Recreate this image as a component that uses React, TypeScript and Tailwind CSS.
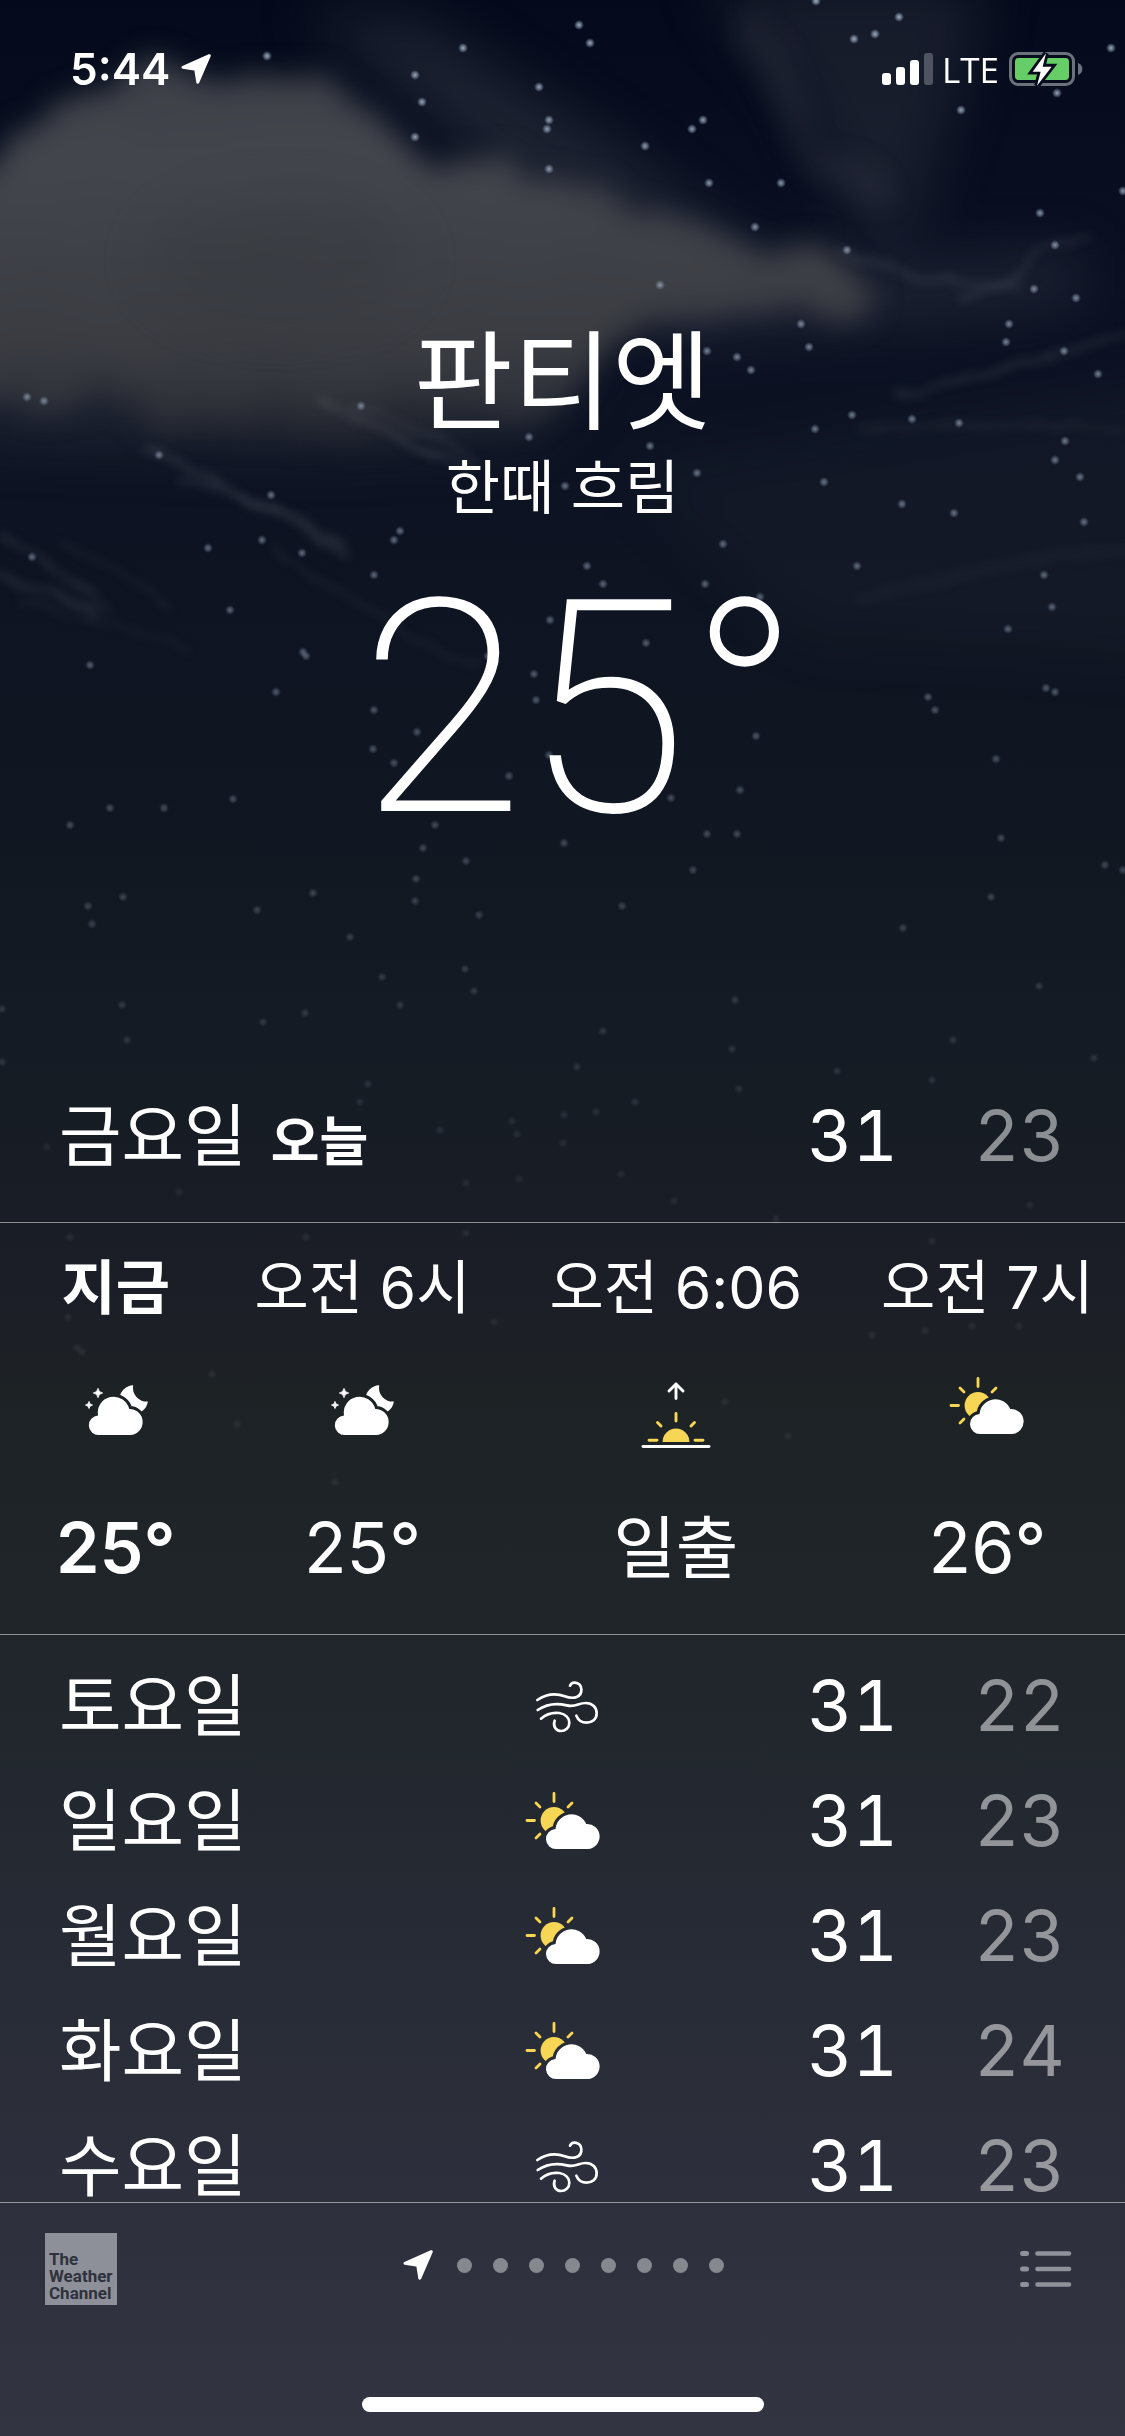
import React from 'react';
import clsx from 'clsx';

type IconName = 'moonCloud' | 'sunrise' | 'sunCloud' | 'wind';

type Hour = { label: string; icon: IconName; value: string; now?: boolean };
type Day = { name: string; icon: IconName; alt: string; high: number; low: number };

const hours: Hour[] = [
  { label: '지금', icon: 'moonCloud', value: '25°', now: true },
  { label: '오전 6시', icon: 'moonCloud', value: '25°' },
  { label: '오전 6:06', icon: 'sunrise', value: '일출' },
  { label: '오전 7시', icon: 'sunCloud', value: '26°' },
];

const days: Day[] = [
  { name: '토요일', icon: 'wind', alt: '바람', high: 31, low: 22 },
  { name: '일요일', icon: 'sunCloud', alt: '한때 흐림', high: 31, low: 23 },
  { name: '월요일', icon: 'sunCloud', alt: '한때 흐림', high: 31, low: 23 },
  { name: '화요일', icon: 'sunCloud', alt: '한때 흐림', high: 31, low: 24 },
  { name: '수요일', icon: 'wind', alt: '바람', high: 31, low: 23 },
];

const pages = [1, 2, 3, 4, 5, 6, 7, 8];

// [x, y] of every star in the sky, they fade towards the horizon
const stars: [number, number][] = [
  [579, 25], [590, 43], [463, 48], [267, 56], [415, 75], [539, 87], [422, 102], [549, 120],
  [547, 129], [415, 137], [703, 120], [692, 129], [645, 146], [549, 169], [709, 183], [781, 183],
  [755, 227], [847, 250], [660, 285], [899, 17], [875, 34], [854, 39], [816, 1], [1111, 48],
  [1057, 93], [961, 110], [1123, 191], [1040, 213], [1055, 245], [1034, 289], [1076, 298], [801, 324],
  [1009, 324], [1006, 342], [809, 347], [1064, 351], [707, 351], [737, 357], [751, 370], [1098, 374],
  [27, 397], [44, 401], [361, 406], [852, 415], [912, 419], [959, 423], [815, 429], [529, 437],
  [650, 446], [1065, 441], [1055, 460], [159, 455], [697, 473], [1080, 477], [824, 482], [565, 486],
  [271, 495], [902, 504], [954, 513], [1084, 522], [400, 531], [394, 540], [262, 540], [208, 548],
  [302, 553], [723, 544], [32, 557], [587, 566], [857, 566], [1044, 575], [374, 575], [603, 584],
  [705, 584], [760, 597], [1052, 607], [230, 610], [550, 620], [1008, 629], [646, 643], [303, 652],
  [306, 656], [488, 656], [90, 665], [534, 674], [1046, 688], [1055, 692], [276, 692], [928, 697],
  [935, 710], [374, 710], [417, 732], [373, 749], [394, 763], [536, 700], [549, 755], [509, 776],
  [671, 798], [740, 790], [756, 736], [996, 759], [435, 825], [707, 834], [737, 834], [233, 799],
  [110, 808], [164, 808], [70, 825], [564, 843], [1001, 838], [423, 848], [466, 861], [693, 870],
  [416, 879], [313, 893], [123, 897], [88, 906], [415, 901], [257, 910], [479, 915], [622, 906],
  [92, 924], [350, 937], [903, 928], [991, 897], [1105, 865], [1123, 870], [465, 969], [382, 977],
  [474, 991], [400, 1005], [305, 1013], [122, 1005], [263, 1022], [127, 1040], [1039, 986], [735, 1000],
  [603, 1031], [953, 1040], [732, 1049], [1094, 1058], [2, 1009], [2, 1062],
  [577, 1067], [368, 1084], [837, 1071], [932, 1080], [739, 1089], [360, 1102], [635, 1102],
  [596, 1112], [564, 1115], [512, 1121], [440, 1130], [517, 1134], [563, 1143], [47, 1147], [519, 1179],
  [621, 1174], [466, 1183], [179, 1192], [674, 1201], [1030, 1205], [776, 1219], [70, 1237], [306, 1237],
  [466, 1233], [932, 1241], [494, 1322], [872, 1335], [925, 1331], [972, 1326], [1019, 1326], [68, 1317],
  [77, 1348], [82, 1352], [212, 1374], [237, 1424], [725, 1402], [788, 1436], [335, 1482],
];

const Sky: React.FC = () => (
  <svg
    className="absolute inset-0 h-full w-full"
    viewBox="0 0 1125 2436"
    preserveAspectRatio="xMidYMin slice"
    colorInterpolationFilters="sRGB"
    aria-hidden="true"
  >
    <defs>
      <filter id="puff" x="-20%" y="-20%" width="140%" height="140%">
        <feTurbulence type="fractalNoise" baseFrequency="0.016" numOctaves="5" seed="8" result="noise" />
        <feDisplacementMap in="SourceGraphic" in2="noise" scale="55" xChannelSelector="R" yChannelSelector="G" />
        <feGaussianBlur stdDeviation="14" />
      </filter>
      <filter id="wisp" x="-30%" y="-30%" width="160%" height="160%">
        <feTurbulence type="fractalNoise" baseFrequency="0.03" numOctaves="4" seed="3" result="noise" />
        <feDisplacementMap in="SourceGraphic" in2="noise" scale="14" xChannelSelector="R" yChannelSelector="G" />
        <feGaussianBlur stdDeviation="5" />
      </filter>
      <filter id="haze" x="-50%" y="-50%" width="200%" height="200%">
        <feGaussianBlur stdDeviation="28" />
      </filter>
      <linearGradient id="cloudFill" x1="0" y1="60" x2="0" y2="440" gradientUnits="userSpaceOnUse">
        <stop offset="0" stopColor="#3b3e46" />
        <stop offset="0.25" stopColor="#43464d" />
        <stop offset="0.5" stopColor="#3e4147" />
        <stop offset="0.75" stopColor="#3a3c42" />
        <stop offset="0.88" stopColor="#31343b" />
        <stop offset="1" stopColor="#1c202a" />
      </linearGradient>
      <radialGradient id="star">
        <stop offset="0" stopColor="#b4c1d2" />
        <stop offset="0.45" stopColor="#8796ac" stopOpacity="0.8" />
        <stop offset="1" stopColor="#8796ac" stopOpacity="0" />
      </radialGradient>
    </defs>

    <g filter="url(#haze)" fill="#5a5d66">
      <path d="M700 -20H990L960 90L900 260L850 210L790 90Z" opacity="0.22" />
      <path d="M300 10L420 20L620 150L780 280L720 290L500 170Z" opacity="0.28" />
      <path d="M640 260L900 270L1080 250L1080 300L900 320L650 340Z" opacity="0.25" />
      <path d="M-40 360L300 370L600 350L520 440L300 450L-40 440Z" opacity="0.22" />
      <path d="M620 470L1180 380L1180 660L800 640Z" opacity="0.07" />
    </g>
    <path
      filter="url(#puff)"
      fill="url(#cloudFill)"
      d="M-60 190L20 140L70 92L140 68L220 80L290 74L355 96L405 138L430 172L500 166L570 182L620 202L690 224L755 252L820 244L858 274L890 306L850 314L780 308L690 316L630 340L580 384L510 424L400 436L300 440L160 425L80 400L-60 394Z"
    />
    <ellipse cx="280" cy="260" rx="130" ry="60" fill="#34373c" opacity="0.4" filter="url(#haze)" />
    <g filter="url(#wisp)" fill="none" stroke="#737883" strokeLinecap="round">
      <path d="M320 400Q400 440 470 470" strokeWidth="4" opacity="0.4" />
      <path d="M350 404Q420 425 480 462" strokeWidth="3" opacity="0.3" />
      <path d="M150 450Q240 490 350 555" strokeWidth="5" opacity="0.26" />
      <path d="M180 478Q270 500 345 545" strokeWidth="4" opacity="0.26" />
      <path d="M270 550Q340 590 400 630T480 660" strokeWidth="3" opacity="0.22" />
      <path d="M0 535Q60 570 110 610" strokeWidth="5" opacity="0.22" />
      <path d="M0 575Q50 590 95 612" strokeWidth="5" opacity="0.26" />
      <path d="M20 600Q110 620 190 650" strokeWidth="3" opacity="0.18" />
      <path d="M60 545Q110 560 170 608" strokeWidth="3" opacity="0.16" />
      <path d="M960 300Q1010 285 1030 260T1090 240" strokeWidth="5" opacity="0.18" />
      <path d="M840 250Q930 290 1020 285" strokeWidth="7" opacity="0.18" />
      <path d="M900 395Q1010 370 1125 335" strokeWidth="7" opacity="0.18" />
      <path d="M860 430Q1000 420 1125 430" strokeWidth="7" opacity="0.1" />
      <path d="M860 600Q1000 560 1125 550" strokeWidth="10" opacity="0.07" />
    </g>
    <path
      d="M740 10Q770 60 790 120T890 190"
      fill="none"
      stroke="#5a5d66"
      strokeWidth="26"
      opacity="0.2"
      filter="url(#puff)"
    />

    {stars.map(([x, y]) => (
      <circle key={`${x}-${y}`} cx={x} cy={y} r="5" fill="url(#star)" opacity={Math.max(0.1, 0.9 - y / 1450)} />
    ))}
  </svg>
);

const LocationArrow: React.FC<{ className?: string }> = ({ className }) => (
  <svg className={className} viewBox="0 0 32 32" fill="currentColor" stroke="currentColor" aria-hidden="true">
    <path d="M29.3 2.7L3 14.3L15.7 16.2L17.8 29.2Z" strokeWidth="3" strokeLinejoin="round" />
  </svg>
);

const sunCloudPath = 'M31.5 60A10 10 0 0 1 30.5 40A16 16 0 0 1 61.2 35A12.5 12.5 0 0 1 63 60Z';
const moonCloudPath = 'M21 61A9.7 9.7 0 0 1 20 41.6A16 16 0 0 1 51.3 35A13 13 0 0 1 52 61Z';

const SunCloudIcon: React.FC = () => (
  <svg className="h-16 w-19" viewBox="0 0 76 64" aria-hidden="true">
    <mask id="sunMask">
      <rect width="76" height="64" fill="#fff" />
      <path d={sunCloudPath} fill="#000" stroke="#000" strokeWidth="6" />
    </mask>
    <circle cx="29" cy="31.5" r="13.4" fill="#f6d654" mask="url(#sunMask)" />
    <path
      d="M29 4.5V12.5M2 31.5H9.5M11 14L15 18M47 14L43 18M11 49L15 45"
      stroke="#f6d654"
      strokeWidth="2.8"
      strokeLinecap="round"
    />
    <path d={sunCloudPath} fill="#fff" />
  </svg>
);

const MoonCloudIcon: React.FC = () => (
  <svg className="h-16 w-19" viewBox="0 0 76 64" fill="#fff" aria-hidden="true">
    <mask id="moonMask">
      <rect width="76" height="64" fill="#fff" />
      <path d={moonCloudPath} fill="#000" stroke="#000" strokeWidth="6" />
    </mask>
    <path d="M55.2 11.2A14.3 14.3 0 1 0 69.9 27.5A13.6 13.6 0 0 1 55.2 11.2Z" mask="url(#moonMask)" />
    <path d="M20 14.3Q20.6 18.4 24.7 19Q20.6 19.6 20 23.7Q19.4 19.6 15.3 19Q19.4 18.4 20 14.3Z" stroke="#fff" strokeWidth="0.8" />
    <path d="M11 27.4Q11.5 30.5 14.6 31Q11.5 31.5 11 34.6Q10.5 31.5 7.4 31Q10.5 30.5 11 27.4Z" stroke="#fff" strokeWidth="0.8" />
    <path d={moonCloudPath} />
  </svg>
);

const SunriseIcon: React.FC = () => (
  <svg className="h-19 w-19" viewBox="0 0 76 76" fill="none" strokeWidth="2.9" strokeLinecap="round" aria-hidden="true">
    <path d="M38 10V24.5M31 17L38 10L45 17" stroke="#fff" strokeLinejoin="round" />
    <path d="M24.6 68A13.4 13.4 0 1 1 51.4 68Z" fill="#f6d654" />
    <path d="M38 39.5V47M19.5 48.5L23 52M56.5 48.5L53 52M11 66.3H19M57 66.3H65" stroke="#f6d654" />
    <path d="M5 72.5H71" stroke="#fff" />
  </svg>
);

const WindIcon: React.FC = () => (
  <svg
    className="h-16 w-19"
    viewBox="193 69 228 192"
    fill="none"
    stroke="#fff"
    strokeWidth="8"
    strokeLinecap="round"
    aria-hidden="true"
  >
    <path d="M230 147C262 126 290 128 312 136C340 146 364 138 362 114C360 92 334 90 328 104" />
    <path d="M231 177C262 156 290 156 318 163C345 170 352 156 375 156C396 156 408 170 408 187C408 205 394 215 378 215C362 215 352 206 347 194" />
    <path d="M241 203C260 186 280 184 296 186C316 189 326 202 326 215C326 230 314 240 301 240C286 240 276 226 282 209" />
  </svg>
);

const icons: Record<IconName, React.FC> = {
  moonCloud: MoonCloudIcon,
  sunrise: SunriseIcon,
  sunCloud: SunCloudIcon,
  wind: WindIcon,
};

const StatusBar: React.FC = () => (
  <div className="flex h-[138px] items-center justify-between pr-[41px] pl-[70px]">
    <div className="flex items-center gap-[10px]">
      <span className="text-[44px] leading-none font-semibold">5:44</span>
      <LocationArrow className="h-8 w-8" />
    </div>
    <div className="flex items-center gap-[9px]">
      <div className="flex items-end gap-[5px]">
        <span className="h-3 w-[9px] rounded-[3px] bg-white" />
        <span className="h-[18px] w-[9px] rounded-[3px] bg-white" />
        <span className="h-[25px] w-[9px] rounded-[3px] bg-white" />
        <span className="h-8 w-[9px] rounded-[3px] bg-white/25" />
      </div>
      <span className="font-['Open_Sans'] text-[35px] leading-none font-medium">LTE</span>
      <svg className="h-[38px] w-[76px]" viewBox="504 90 228 114" aria-hidden="true">
        <rect x="511.5" y="100.5" width="189" height="93" rx="23" fill="none" stroke="#6d717b" strokeWidth="9" />
        <path d="M714 129Q727 134 727 147T714 165Z" fill="#6d717b" />
        <rect x="525" y="114" width="162" height="66" rx="11" fill="#67ce67" />
        <path
          d="M618 100L578 155L602 155L591 197L635 140L608 140Z"
          fill="#fff"
          stroke="#060c1c"
          strokeWidth="17"
          paintOrder="stroke"
        />
      </svg>
    </div>
  </div>
);

const HourlyStrip: React.FC = () => (
  <ul className="flex shrink-0 gap-[79px] overflow-hidden border-y border-white/50 px-14 pt-[33px] pb-[42px] whitespace-nowrap">
    {hours.map((hour) => {
      const Icon = icons[hour.icon];
      return (
        <li key={hour.label} className={clsx('flex shrink-0 flex-col items-center', hour.now && 'font-semibold')}>
          <span className="text-[59px] leading-[64px]">{hour.label}</span>
          <span className="mt-[54px] flex h-19 shrink-0 items-start">
            <Icon />
          </span>
          <span
            className={clsx(
              'mt-[54px] leading-[88px]',
              hour.icon === 'sunrise' ? 'text-[68px]' : 'text-[70px]',
            )}
          >
            {hour.value}
          </span>
        </li>
      );
    })}
  </ul>
);

const DailyForecast: React.FC = () => (
  <table className="w-full table-fixed">
    <colgroup>
      <col className="w-2/5" />
      <col className="w-1/5" />
      <col className="w-1/5" />
      <col className="w-1/5" />
    </colgroup>
    <tbody>
      {days.map((day) => {
        const Icon = icons[day.icon];
        return (
          <tr key={day.name} className="h-[115px]">
            <th scope="row" className="pl-[59px] text-left text-[68px] leading-[88px] font-normal">
              {day.name}
            </th>
            <td aria-label={day.alt}>
              <div className="flex justify-center">
                <Icon />
              </div>
            </td>
            <td className="pr-[2px] text-right text-[70px] leading-[88px] tabular-nums">{day.high}</td>
            <td className="pr-[60px] text-right text-[70px] leading-[88px] text-white/50 tabular-nums">{day.low}</td>
          </tr>
        );
      })}
    </tbody>
  </table>
);

const Toolbar: React.FC = () => (
  <footer className="shrink-0 border-t border-white/50 pb-6">
    <div className="grid grid-cols-[1fr_auto_1fr] items-center px-[45px] pt-[30px]">
      <a
        href="#weather-channel"
        className="flex h-18 w-18 items-end bg-[#8d9098] pb-[3px] pl-1 font-['Roboto'] text-[17px] leading-[17px] font-bold text-[#2f323e]"
      >
        <span>
          The
          <br />
          Weather
          <br />
          Channel
        </span>
      </a>
      <nav className="-mt-2 flex items-center justify-center gap-[21px]" aria-label="도시">
        <button type="button" aria-label="현재 위치" aria-current="page" className="mr-[2px]">
          <LocationArrow className="h-8 w-8" />
        </button>
        {pages.map((page) => (
          <button key={page} type="button" aria-label={`도시 ${page}`} className="h-[15px] w-[15px] rounded-full bg-[#85888f]" />
        ))}
      </nav>
      <button type="button" aria-label="목록" className="mr-2 justify-self-end">
        <svg className="h-9 w-[52px]" viewBox="0 0 52 36" stroke="#8f929a" strokeLinecap="round" aria-hidden="true">
          <path d="M2.5 2.5H6.5M2.5 18H6.5M2.5 33.5H6.5" strokeWidth="5" />
          <path d="M17.5 2.5H49M17.5 18H49M17.5 33.5H49" strokeWidth="4.6" />
        </svg>
      </button>
    </div>
    <div className="mx-auto mt-[92px] h-[15px] w-[402px] rounded-full bg-white" />
  </footer>
);

export default function App() {
  return (
    <div className="relative flex h-screen flex-col overflow-hidden bg-[linear-gradient(to_bottom,#040a1b_0%,#0b1123_12%,#0f1521_29%,#161c24_45%,#1b1e27_53%,#1d2225_57%,#1f2529_66%,#242932_76%,#2d303c_90%,#323442_100%)] font-['Inter','Noto_Sans_CJK_KR',sans-serif] text-white">
      <Sky />
      <div className="relative flex min-h-0 flex-1 flex-col">
        <StatusBar />
        <main className="flex min-h-0 flex-1 flex-col overflow-hidden">
          <header className="flex flex-col items-center pt-[180px]">
            <h1 className="text-[108px] leading-[128px]">판티엣</h1>
            <p className="text-[59px] leading-[84px]">한때 흐림</p>
            <p className="mt-10 pl-9 font-['Roboto'] text-[298px] leading-[280px] font-extralight">25°</p>
          </header>

          <div className="mt-[242px] flex items-baseline pb-9 leading-[88px]">
            <span className="pl-[59px] text-[68px]">금요일</span>
            <span className="ml-6 text-[53px] font-semibold">오늘</span>
            <span className="ml-auto w-1/5 pr-[2px] text-right text-[70px] tabular-nums">31</span>
            <span className="w-1/5 pr-[60px] text-right text-[70px] text-white/50 tabular-nums">23</span>
          </div>

          <HourlyStrip />
          <div className="pt-[13px]">
            <DailyForecast />
          </div>
        </main>
        <Toolbar />
      </div>
    </div>
  );
}
